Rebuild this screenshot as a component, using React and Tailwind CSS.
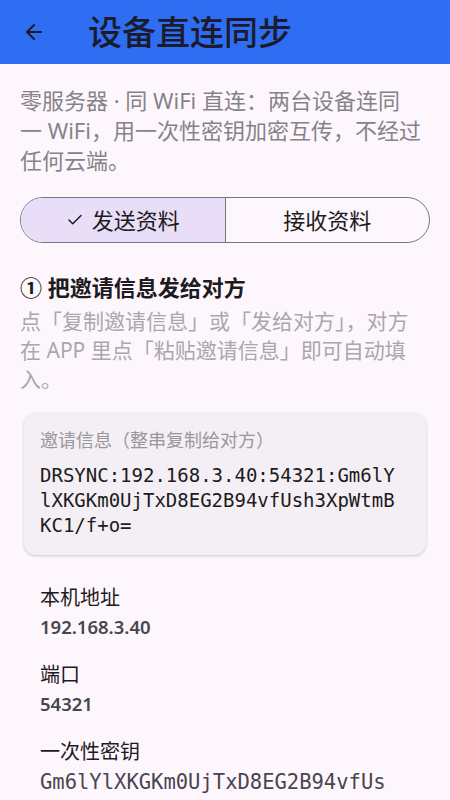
import { ArrowLeft, Check } from 'lucide-react';

const sans = { fontFamily: '"Noto Sans", "Noto Sans CJK SC", sans-serif' };
const mono = { fontFamily: '"DejaVu Sans Mono", "Liberation Mono", monospace' };

const Lines = ({ lines, className }) => (
  <div className={className}>
    {lines.map((l) => (
      <div key={l} className="whitespace-nowrap">{l}</div>
    ))}
  </div>
);

const Field = ({ label, value, isMono }) => (
  <div>
    <div className="text-[20px] leading-[28px] text-[#1d1b20]">{label}</div>
    {isMono ? (
      <div className="w-[350px] text-[20.5px] leading-[32px] text-[#49454f] break-all" style={mono}>
        {value}
      </div>
    ) : (
      <div className="mt-[1px] text-[18.5px] leading-[28px] font-semibold text-[#48464c]">{value}</div>
    )}
  </div>
);

const App = () => {
  return (
    <div className="w-[450px] h-[800px] overflow-hidden bg-[#fdf7fd]" style={sans}>
      {/* Top bar */}
      <div className="h-[64px] bg-[#2f6df2] flex items-center">
        <div className="w-[68px] flex justify-center">
          <ArrowLeft className="w-6 h-6 text-[#1a1c2e]" strokeWidth={2} />
        </div>
        <h1 className="ml-[20px] text-[34px] font-medium text-[#1a1c2e]">设备直连同步</h1>
      </div>

      <div className="px-5 pt-[21px]">
        <Lines
          className="text-[22px] leading-[30px] text-[#858388]"
          lines={['零服务器 · 同 WiFi 直连：两台设备连同', '一 WiFi，用一次性密钥加密互传，不经过', '任何云端。']}
        />

        {/* Segmented button */}
        <div className="mt-[22px] h-[46px] flex rounded-full border border-[#79747e] overflow-hidden">
          <div className="flex-1 bg-[#e8def8] flex items-center justify-center gap-2 border-r border-[#79747e]">
            <Check className="w-[18px] h-[18px] text-[#1d1b20]" strokeWidth={2} />
            <span className="text-[22px] text-[#1d1b20]">发送资料</span>
          </div>
          <div className="flex-1 flex items-center justify-center">
            <span className="text-[22px] text-[#1d1b20]">接收资料</span>
          </div>
        </div>

        <h2 className="mt-[29px] text-[22px] leading-[30px] font-bold text-[#1d1b20]">① 把邀请信息发给对方</h2>
        <Lines
          className="mt-[5px] text-[21px] leading-[29px] text-[#a9a7ab]"
          lines={['点「复制邀请信息」或「发给对方」，对方', '在 APP 里点「粘贴邀请信息」即可自动填', '入。']}
        />
      </div>

      {/* Invite card */}
      <div className="mx-[24px] mt-[19px] rounded-[12px] bg-[#f3eff4] shadow-[0_1px_3px_rgba(0,0,0,0.2)] pl-4 pr-6 pt-[14px] pb-[17px]">
        <div className="text-[18px] leading-[26px] text-[#9a979c]">邀请信息（整串复制给对方）</div>
        <div className="mt-[10px] text-[19px] leading-[25px] text-[#1d1b20] break-all" style={mono}>
          DRSYNC:192.168.3.40:54321:Gm6lYlXKGKm0UjTxD8EG2B94vfUsh3XpWtmBKC1/f+o=
        </div>
      </div>

      <div className="px-[40px] mt-[29px] flex flex-col gap-[20px]">
        <Field label="本机地址" value="192.168.3.40" />
        <Field label="端口" value="54321" />
        <Field label="一次性密钥" value="Gm6lYlXKGKm0UjTxD8EG2B94vfUsh3XpWtmBKC1/f+o=" isMono />
      </div>
    </div>
  );
};

export default App;
